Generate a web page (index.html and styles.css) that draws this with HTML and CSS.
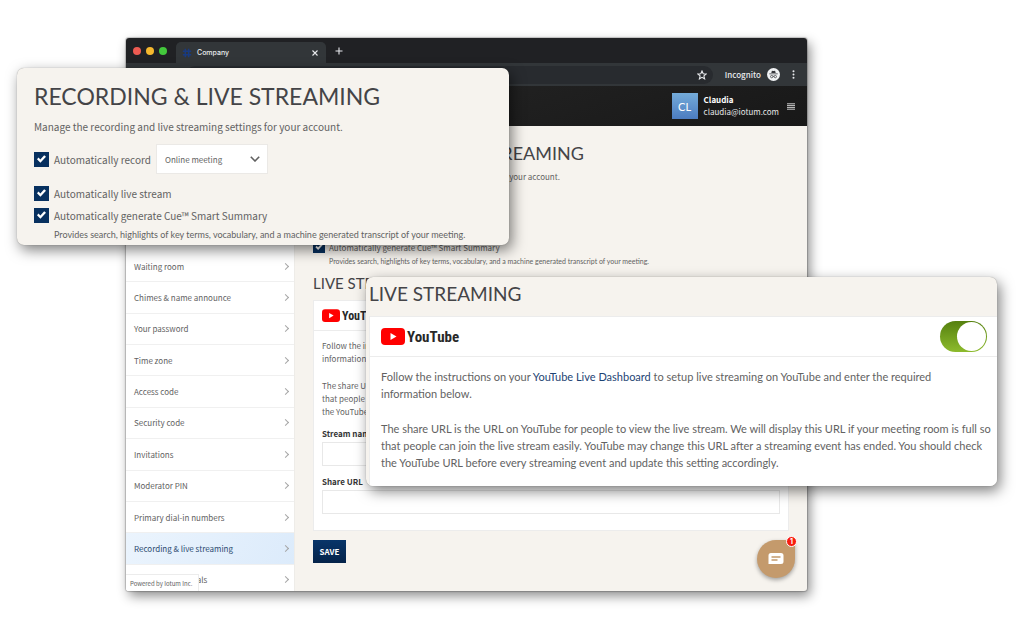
FILE: index.html
```html
<!DOCTYPE html>
<html lang="en">
<head>
<meta charset="utf-8">
<title>Recording &amp; live streaming</title>
<link rel="stylesheet" href="styles.css">
</head>
<body>
<div class="stage">

  <section class="browser">
    <div class="tabs">
      <div class="lights"><i class="light red"></i><i class="light amber"></i><i class="light green"></i></div>
      <div class="tab">
        <svg class="favicon" viewBox="0 0 12 12"><path d="M4 1v10M8 1v10M1 4h10M1 8h10"/></svg>
        <span class="tab-title">Company</span>
        <button class="icon-button" aria-label="Close tab"><svg class="line" width="6" height="6" viewBox="0 0 6 6"><path d="M.5.5l5 5M5.500.5l-5 5"/></svg></button>
      </div>
      <button class="icon-button" aria-label="New tab"><svg class="line" width="8" height="8" viewBox="0 0 8 8"><path d="M4 .5v7M.5 4h7"/></svg></button>
    </div>
    <div class="toolbar">
      <div class="address">
        <svg class="line" width="10" height="10" viewBox="0 0 10 10"><path d="M5 1l1.200 2.700 2.900.3-2.200 1.900.7 2.900L5 7.300 2.400 8.800l.7-2.900L.9 4l2.900-.3z"/></svg>
      </div>
      <span class="incognito">Incognito</span>
      <svg width="13" height="13" viewBox="0 0 13 13"><circle cx="6.500" cy="6.500" r="6.500" fill="#f1f3f4"/><path d="M4.300 5l.6-2.300 1.600.4 1.600-.4.6 2.300zM2.300 5.400h8.400v.8H2.300z" fill="#35363a"/><g fill="none" stroke="#35363a" stroke-width=".7"><circle cx="4.700" cy="8.600" r="1.200"/><circle cx="8.300" cy="8.600" r="1.200"/><path d="M5.900 8.300h1.200"/></g></svg>
      <button class="icon-button" aria-label="Browser menu"><svg width="3" height="9" viewBox="0 0 3 9" fill="#e8eaed"><circle cx="1.500" cy="1.200" r="1"/><circle cx="1.500" cy="4.500" r="1"/><circle cx="1.500" cy="7.800" r="1"/></svg></button>
    </div>
    <header class="account">
      <span class="avatar">CL</span>
      <div class="who"><strong>Claudia</strong><span>claudia@iotum.com</span></div>
      <button class="icon-button" aria-label="Menu"><svg width="8" height="7" viewBox="0 0 8 7"><path d="M0 .8h8M0 2.600h8M0 4.400h8M0 6.200h8" stroke="#ddd" stroke-width=".9"/></svg></button>
    </header>

    <div class="content">
      <nav class="sidebar">
        <ul>
          <li><a href="#">Waiting room</a></li>
          <li><a href="#">Chimes &amp; name announce</a></li>
          <li><a href="#">Your password</a></li>
          <li><a href="#">Time zone</a></li>
          <li><a href="#">Access code</a></li>
          <li><a href="#">Security code</a></li>
          <li><a href="#">Invitations</a></li>
          <li><a href="#">Moderator PIN</a></li>
          <li><a href="#">Primary dial-in numbers</a></li>
          <li><a href="#" class="current">Recording &amp; live streaming</a></li>
          <li><a href="#">Dial-out credentials</a></li>
        </ul>
        <span class="powered">Powered by Iotum Inc.</span>
      </nav>

      <main class="settings small">
        <h1>RECORDING &amp; LIVE STREAMING</h1>
        <p class="intro">Manage the recording and live streaming settings for your account.</p>
        <div class="option record">
          <input type="checkbox" id="w-record" checked><label for="w-record">Automatically record</label>
          <span class="picker"><select aria-label="Record"><option>Online meeting</option></select><svg viewBox="0 0 10 6"><path d="M.8.8L5 5 9.200.8"/></svg></span>
        </div>
        <div class="option stream"><input type="checkbox" id="w-stream" checked><label for="w-stream">Automatically live stream</label></div>
        <div class="option cue"><input type="checkbox" id="w-cue" checked><label for="w-cue">Automatically generate Cue™ Smart Summary</label></div>
        <p class="note">Provides search, highlights of key terms, vocabulary, and a machine generated transcript of your meeting.</p>
        <h2>LIVE STREAMING</h2>
        <div class="card">
          <div class="card-head">
            <svg class="play" viewBox="0 0 24 17"><rect width="24" height="17" rx="4" fill="#f00"/><path d="M9.500 5v7l6-3.500z" fill="#fff"/></svg><span class="brand">YouTube</span>
          </div>
          <div class="card-body">
            <p>Follow the instructions on your <a href="#">YouTube Live Dashboard</a> to setup live streaming on YouTube and enter the required<br>information below.</p>
            <p>The share URL is the URL on YouTube for people to view the live stream. We will display this URL if your meeting room is full so<br>that people can join the live stream easily. YouTube may change this URL after a streaming event has ended. You should check<br>the YouTube URL before every streaming event and update this setting accordingly.</p>
            <label for="name">Stream name</label>
            <input type="text" id="name">
            <label for="share">Share URL</label>
            <input type="text" id="share">
          </div>
        </div>
        <button class="save">SAVE</button>
      </main>
    </div>
    <button class="chat" aria-label="Open chat">
      <svg width="16" height="12" viewBox="0 0 16 12"><path d="M3 0h10a2.500 2.500 0 0 1 2.500 2.500v6A2.500 2.500 0 0 1 13 11H.5V2.500A2.500 2.500 0 0 1 3 0z" fill="#fff"/><path d="M3.500 4h9M3.500 7h6" stroke="#c49a6c" stroke-width="1.600"/></svg>
      <span class="badge">1</span>
    </button>
  </section>

  <section class="panel recording large">
    <h1>RECORDING &amp; LIVE STREAMING</h1>
    <p class="intro">Manage the recording and live streaming settings for your account.</p>
    <div class="option record">
      <input type="checkbox" id="p-record" checked><label for="p-record">Automatically record</label>
      <span class="picker"><select aria-label="Record"><option>Online meeting</option></select><svg viewBox="0 0 10 6"><path d="M.8.8L5 5 9.200.8"/></svg></span>
    </div>
    <div class="option stream"><input type="checkbox" id="p-stream" checked><label for="p-stream">Automatically live stream</label></div>
    <div class="option cue"><input type="checkbox" id="p-cue" checked><label for="p-cue">Automatically generate Cue™ Smart Summary</label></div>
    <p class="note">Provides search, highlights of key terms, vocabulary, and a machine generated transcript of your meeting.</p>
  </section>

  <section class="panel streaming large">
    <h2>LIVE STREAMING</h2>
    <div class="card">
      <div class="card-head">
        <svg class="play" viewBox="0 0 24 17"><rect width="24" height="17" rx="4" fill="#f00"/><path d="M9.500 5v7l6-3.500z" fill="#fff"/></svg><span class="brand">YouTube</span>
        <input type="checkbox" class="toggle" aria-label="YouTube live streaming" checked>
      </div>
      <div class="card-body">
        <p>Follow the instructions on your <a href="#">YouTube Live Dashboard</a> to setup live streaming on YouTube and enter the required<br>information below.</p>
        <p>The share URL is the URL on YouTube for people to view the live stream. We will display this URL if your meeting room is full so that people can join the live stream easily. YouTube may change this URL after a streaming event has ended. You should check the YouTube URL before every streaming event and update this setting accordingly.</p>
      </div>
    </div>
  </section>

</div>
</body>
</html>
```
FILE: styles.css
```css
*, ::before, ::after { box-sizing: border-box; }
body, h1, h2, p, ul { margin: 0; padding: 0; }
body {
  background: #fff;
  color: #626262;
  font-family: "Noto Sans CJK SC", "Open Sans", sans-serif;
  font-size: 8px;
}
button, input, select { font: inherit; color: inherit; margin: 0; padding: 0; border: 0; }
button { cursor: pointer; }
a { color: inherit; text-decoration: none; }
svg { display: block; flex: none; }
h1, h2 { font-family: Lato, sans-serif; font-weight: 400; color: #444447; white-space: nowrap; }

.stage { position: relative; min-height: 629px; overflow: hidden; }

/* Browser window */
.browser {
  position: absolute; left: 126px; right: 217px; top: 38px;
  border-radius: 3px;
  background: #f6f3ee;
  box-shadow: 0 0 1px 1px rgba(0,0,0,.2), 3px 5px 12px rgba(0,0,0,.45);
}
.icon-button { background: none; display: flex; }
.line { fill: none; stroke: #e8eaed; stroke-width: 1.1; }
.tabs {
  display: flex; align-items: center; gap: 9px;
  height: 25px; padding-left: 7px;
  background: #202124; border-radius: 3px 3px 0 0;
}
.lights { display: flex; gap: 5px; }
.light { width: 8px; height: 8px; border-radius: 50%; }
.red { background: #ee5b52; }
.amber { background: #f5b82e; }
.green { background: #43c83c; }
.tab {
  display: flex; align-items: center; align-self: flex-end; gap: 5px;
  width: 150px; height: 21px; padding: 0 8px 0 6px;
  background: #323639; border-radius: 5px 5px 0 0; color: #e8eaed;
}
.favicon { width: 10px; height: 10px; fill: none; stroke: #183a80; stroke-width: 1.8; }
.tab-title { flex: 1; font-family: Inter, sans-serif; font-size: 7px; font-weight: 500; }
.toolbar {
  display: flex; align-items: center; height: 23px; padding-right: 12px;
  background: #323639; color: #e8eaed;
}
.address {
  flex: 1; display: flex; align-items: center; justify-content: flex-end;
  height: 18px; padding-right: 6px; margin: 0 12px 0 60px;
  border-radius: 9px; background: #282b2f;
}
.incognito { font-weight: 500; margin-right: 6px; }
.toolbar .icon-button { margin-left: 12px; }
.account {
  display: flex; align-items: center; justify-content: flex-end;
  height: 40px; padding-right: 12px;
  background: linear-gradient(160deg, #292929, #181818); color: #e6e6e6;
}
.avatar {
  display: grid; place-items: center; width: 26px; height: 26px; margin-right: 6px;
  background: linear-gradient(#74abd9, #4c7cc0); color: #fff;
  font: 11px Lato, sans-serif;
}
.who { display: grid; line-height: 12px; margin-right: 8px; }
.who strong { color: #fff; }

.content { display: flex; height: 465px; overflow: hidden; border-radius: 0 0 3px 3px; }
.sidebar {
  position: relative; width: 169px; padding-top: 125px;
  background: #fff; border-right: 1px solid #eeece8;
}
.sidebar ul { display: grid; grid-auto-rows: 1fr; height: 345px; list-style: none; }
.sidebar a {
  display: flex; align-items: center; justify-content: space-between;
  height: 100%; padding: 0 6px 0 8px; border-bottom: 1px solid #f0f0f0;
}
.sidebar a::after {
  content: ""; width: 5px; height: 5px;
  border: solid #a5a5a5; border-width: 1px 1px 0 0; transform: rotate(45deg);
}
.sidebar .current { background: linear-gradient(120deg, #ebf4fd, #dcebfb); color: #2c4a70; }
.powered {
  position: absolute; left: 0; bottom: 0; padding: 4px 6px 3px 4px; line-height: 9px;
  background: #fff; border: solid #ececec; border-width: 1px 1px 0 0; font-size: 6px;
}

/* Shared settings controls */
.option { display: flex; align-items: center; }
.option input {
  appearance: none; display: grid; place-items: center; flex: none;
  background: #07305f;
}
.option input::before {
  content: ""; width: 60%; height: 60%; background: #fff;
  clip-path: polygon(0 52%, 17% 34%, 37% 55%, 80% 8%, 100% 26%, 38% 92%);
}
.picker { position: relative; display: flex; background: #fff; border: 1px solid #ebe9e6; }
.picker select { appearance: none; background: none; width: 100%; }
.picker svg {
  position: absolute; right: 7px; top: 50%; width: 10px; height: 6px; margin-top: -3px;
  fill: none; stroke: #606060; stroke-width: 1.6; pointer-events: none;
}
.card { background: #fff; border: 1px solid #ececec; }
.card-head { display: flex; align-items: center; border-bottom: 1px solid #ececec; }
.brand { font-family: "Liberation Sans Narrow", "Roboto Condensed", Roboto, sans-serif; font-weight: 700; color: #282828; }
.card-body a { color: #1d4473; }

/* Settings page inside the window */
.settings { flex: 1; padding: 16px 18px 0; min-width: 0; }
.small h1 { font-size: 18px; line-height: 22px; }
.small h2 { font-size: 15px; line-height: 18px; margin: 7px 0 8px; }
.small .intro { line-height: 14px; margin-top: 6px; }
.small .option { min-height: 14px; gap: 4px; }
.small .option input { width: 12px; height: 12px; }
.small .record { margin-top: 7px; }
.small .stream { margin-top: 8px; }
.small .cue { margin-top: 4px; }
.small .picker { width: 87px; height: 23px; }
.small select { padding-left: 6px; font-size: 6px; }
.small .note { margin: 2px 0 0 16px; font: 7px/11px Lato, sans-serif; }
.small .card-head { height: 30px; padding-left: 8px; gap: 2px; }
.small .play { width: 18px; height: 13px; }
.small .brand { font-size: 12px; }
.small .card-body { padding: 8px 8px 16px; line-height: 13px; }
.small .card-body p { white-space: nowrap; }
.small .card-body p + p { margin-top: 14px; }
.small .card-body label { display: block; margin-top: 9px; font-weight: 700; color: #333; }
.small .card-body input { display: block; width: 100%; height: 24px; margin-top: 2px; border: 1px solid #e8e8e8; background: #fff; }
.save {
  margin-top: 9px; width: 33px; height: 23px;
  background: linear-gradient(#083569, #05234a); color: #fff; font-weight: 700;
}
.chat {
  position: absolute; right: 12px; bottom: 13px; width: 38px; height: 38px;
  display: grid; place-items: center; color: #fff;
  border-radius: 50% 5px 50% 50%; background: #c49a6c; box-shadow: 0 2px 4px rgba(0,0,0,.35);
}
.badge {
  position: absolute; right: -2px; top: -4px; width: 11px; height: 11px;
  border: 1px solid #fff; border-radius: 50%; background: #f81c0f;
  font: 700 7px/9px Inter, sans-serif; text-align: center;
}

/* Enlarged panels over the window */
.panel { position: absolute; border-radius: 7px; background: #f6f3ee; overflow: hidden; box-shadow: 0 0 1px rgba(0,0,0,.4), 3px 5px 14px rgba(0,0,0,.5); }
.recording { left: 17px; right: 515px; top: 68px; padding: 14px 17px 3px; }
.streaming { left: 366px; right: 27px; top: 277px; padding: 6px 0 0 3px; }
.large h1 { font-size: 23px; line-height: 28px; }
.large h2 { font-size: 19px; line-height: 22px; margin-bottom: 11px; }
.large .intro { font-size: 10px; line-height: 14px; margin-top: 10px; }
.large .option { gap: 5px; min-height: 16px; font-size: 10px; }
.large .option input { width: 15px; height: 15px; }
.large .record { margin-top: 10px; }
.large .stream { margin-top: 11px; }
.large .cue { margin-top: 6px; }
.large .picker { width: 112px; height: 30px; }
.large select { padding-left: 8px; font-size: 8px; }
.large .note { margin: 5px 0 0 20px; font: 9px/14px Lato, sans-serif; }
.streaming .card { border-width: 1px 0 0 1px; }
.large .card-head { height: 40px; padding: 0 10px 0 11px; gap: 2px; }
.large .play { width: 24px; height: 17px; }
.large .brand { font-size: 15px; }
.large .card-body { padding: 11px 5px 15px 11px; font: 11px/17px Lato, sans-serif; }
.large .card-body p + p { margin-top: 18px; }
.toggle {
  appearance: none; display: flex; justify-content: flex-end; margin-left: auto;
  width: 47px; height: 31px; padding: 1px; border-radius: 16px;
  background: linear-gradient(#55800f, #8dbb2d);
}
.toggle::before { content: ""; width: 29px; height: 29px; border-radius: 50%; background: #fff; }
```
